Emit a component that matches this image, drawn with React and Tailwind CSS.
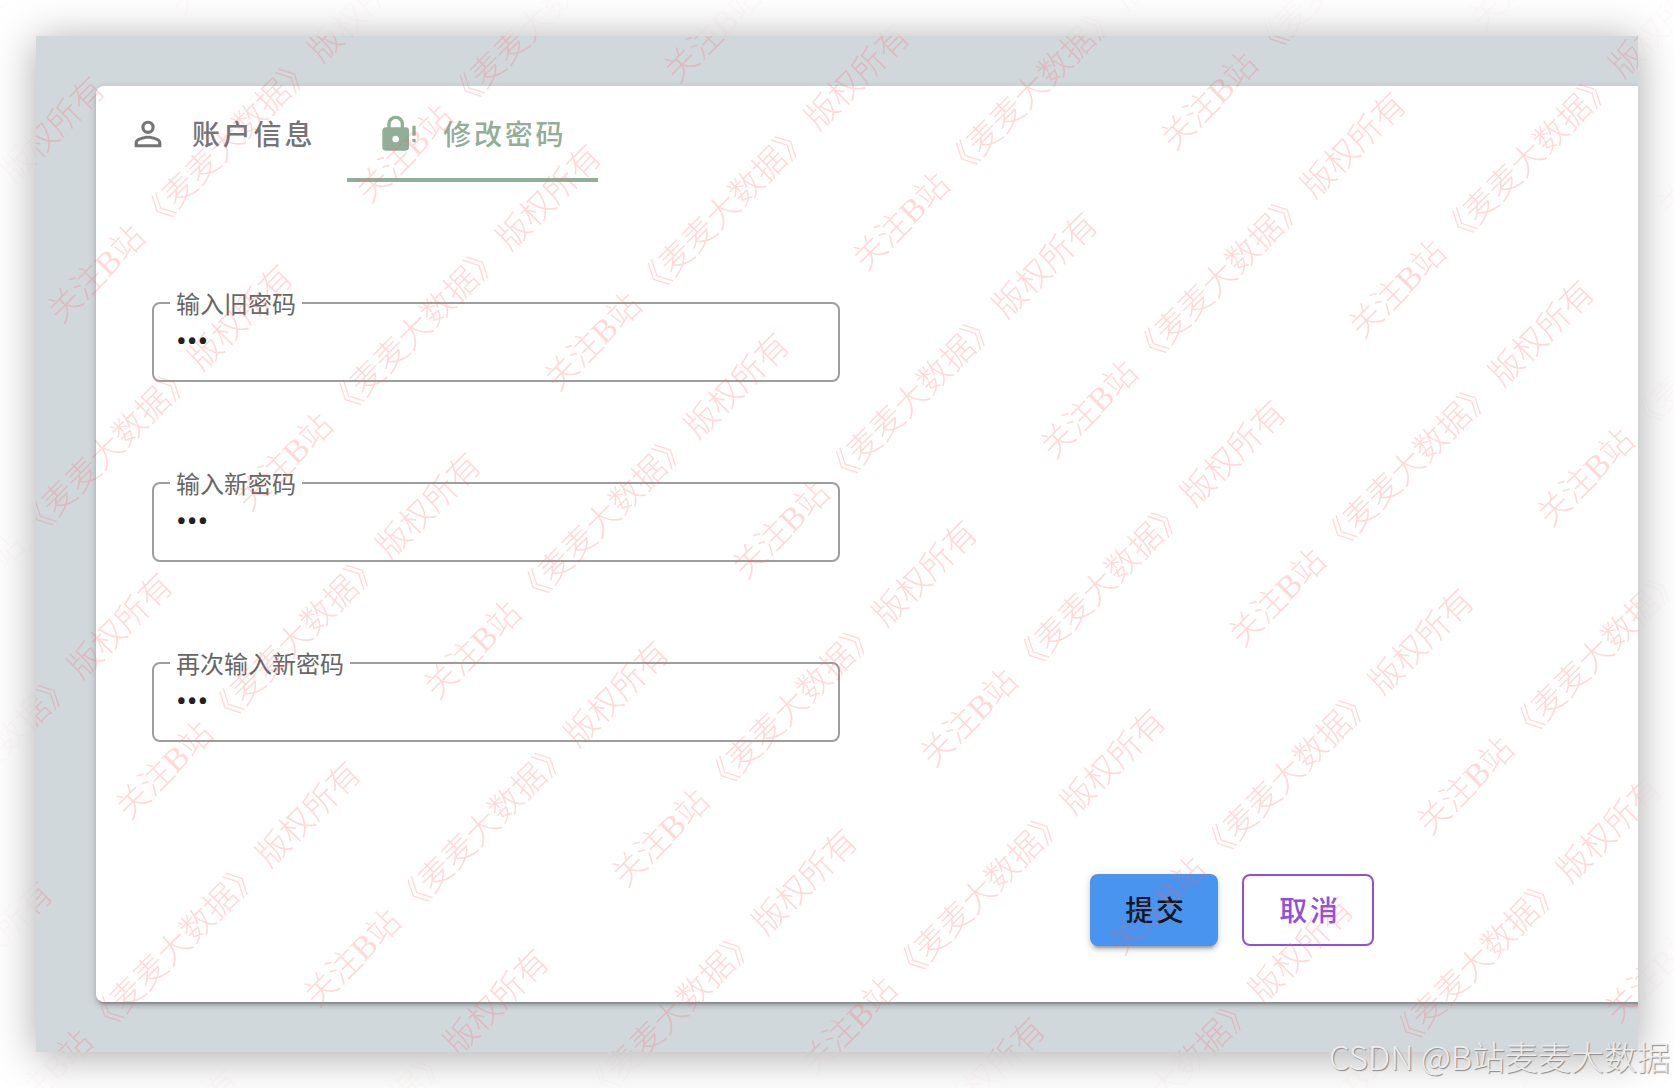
import { useState } from "react";

const MARK = "关注B站 《麦麦大数据》 版权所有";

function Watermark() {
  const rows = Array.from({ length: 15 }, (_, i) => i);
  const cells = [0, 1, 2, 3];
  return (
    <div
      aria-hidden="true"
      className="pointer-events-none absolute inset-0 overflow-hidden p-9 [mask:linear-gradient(#000_0_0)_content-box,linear-gradient(#0002_0_0)]"
    >
      <div className="absolute top-0 left-0 flow-root w-max origin-top-left -rotate-45 font-['Liberation_Serif','Noto_Sans_CJK_SC',serif] text-[33px] font-light whitespace-pre text-[#ff6464]/25 select-none">
        <div className="-mt-[70px]">
          {rows.map((row) => (
            <div key={row} className={`flex h-[133px] items-center ${row % 2 ? "-ml-[1095px]" : "-ml-[792px]"}`}>
              {cells.map((cell) => (
                <span key={cell} className="w-[606px] shrink-0">
                  {MARK}
                </span>
              ))}
            </div>
          ))}
        </div>
      </div>
    </div>
  );
}

function AccountIcon() {
  return (
    <svg viewBox="0 0 24 24" className="size-10" fill="currentColor" aria-hidden="true">
      <path d="M12,4A4,4 0 0,1 16,8A4,4 0 0,1 12,12A4,4 0 0,1 8,8A4,4 0 0,1 12,4M12,5.9A2.1,2.1 0 0,0 9.9,8A2.1,2.1 0 0,0 12,10.1A2.1,2.1 0 0,0 14.1,8A2.1,2.1 0 0,0 12,5.9M12,13C14.67,13 20,14.33 20,17V20H4V17C4,14.33 9.33,13 12,13M12,14.9C9.03,14.9 5.9,16.36 5.9,17V18.1H18.1V17C18.1,16.36 14.97,14.9 12,14.9Z" />
    </svg>
  );
}

function LockAlertIcon() {
  return (
    <svg viewBox="0 0 24 24" className="size-10" fill="currentColor" aria-hidden="true">
      <path d="M10,17A2,2 0 0,0 12,15C12,13.89 11.1,13 10,13A2,2 0 0,0 8,15A2,2 0 0,0 10,17M16,8A2,2 0 0,1 18,10V20A2,2 0 0,1 16,22H4A2,2 0 0,1 2,20V10C2,8.89 2.9,8 4,8H5V6A5,5 0 0,1 10,1A5,5 0 0,1 15,6V8H16M10,3A3,3 0 0,0 7,6V8H13V6A3,3 0 0,0 10,3M22,13H20V7H22V13M22,17H20V15H22V17Z" />
    </svg>
  );
}

function Tab({ icon, label, active }) {
  return (
    <button
      type="button"
      role="tab"
      aria-selected={active}
      className={`flex h-24 items-center gap-6 border-b-4 px-8 pt-1 text-[28px] font-medium tracking-widest ${
        active ? "border-[#92ad98] text-[#92ad98]" : "border-transparent text-[#757575]"
      }`}
    >
      {icon}
      <span className="pb-0.5">{label}</span>
    </button>
  );
}

function PasswordField({ id, label }) {
  const [value, setValue] = useState("123");
  return (
    <fieldset className="w-full max-w-[688px] rounded-lg border-2 border-[#9e9e9e] pb-[19px]">
      <legend className="ml-4 px-1.5 text-2xl leading-9 text-[#666666]">
        <label htmlFor={id}>{label}</label>
      </legend>
      <input
        id={id}
        type="password"
        value={value}
        onChange={(e) => setValue(e.target.value)}
        className="block h-10 w-full bg-transparent px-[22px] font-['Roboto',sans-serif] text-[32px] text-[#212121] outline-none"
      />
    </fieldset>
  );
}

const FIELDS = [
  { id: "old-password", label: "输入旧密码" },
  { id: "new-password", label: "输入新密码" },
  { id: "repeat-password", label: "再次输入新密码" },
];

export default function App() {
  return (
    <div className="relative min-h-screen overflow-hidden bg-white p-9 font-['Noto_Sans_CJK_SC',sans-serif]">
      <div className="relative bg-[#d0d8dc] py-[50px] pl-[60px] shadow-[0_4px_40px_rgba(0,0,0,0.34)]">
        <div className="absolute inset-0 overflow-hidden">
          <div className="absolute inset-y-[50px] left-[60px] -right-5 rounded-lg shadow-[0_6px_2px_-4px_rgba(0,0,0,0.2),0_4px_4px_rgba(0,0,0,0.14),0_2px_10px_rgba(0,0,0,0.12)]" />
        </div>
        <main className="relative rounded-l-lg bg-white pb-14">
          <div role="tablist" className="flex">
            <Tab icon={<AccountIcon />} label="账户信息" />
            <Tab icon={<LockAlertIcon />} label="修改密码" active />
          </div>
          <form onSubmit={(e) => e.preventDefault()}>
            <div className="mt-[103px] flex flex-col gap-[83px] pl-14">
              {FIELDS.map((field) => (
                <PasswordField key={field.id} {...field} />
              ))}
            </div>
            <div className="mt-[132px] flex justify-end gap-6 pr-[264px] text-[28px] font-medium tracking-widest">
              <button
                type="submit"
                className="h-[72px] min-w-32 rounded-lg bg-[#4894ee] pb-0.5 pl-1 text-black/87 shadow-[0_6px_2px_-4px_rgba(0,0,0,0.2),0_4px_4px_rgba(0,0,0,0.14),0_2px_10px_rgba(0,0,0,0.12)]"
              >
                提交
              </button>
              <button
                type="button"
                className="h-[72px] min-w-[132px] rounded-lg border-2 border-[#9150db] pb-0.5 pl-1 text-[#9150db]"
              >
                取消
              </button>
            </div>
          </form>
        </main>
      </div>
      <Watermark />
      <p className="absolute right-1 bottom-3 text-[33px] leading-10 font-light text-[#ececec] [text-shadow:1px_1px_1px_#888]">
        CSDN @B站麦麦大数据
      </p>
    </div>
  );
}
